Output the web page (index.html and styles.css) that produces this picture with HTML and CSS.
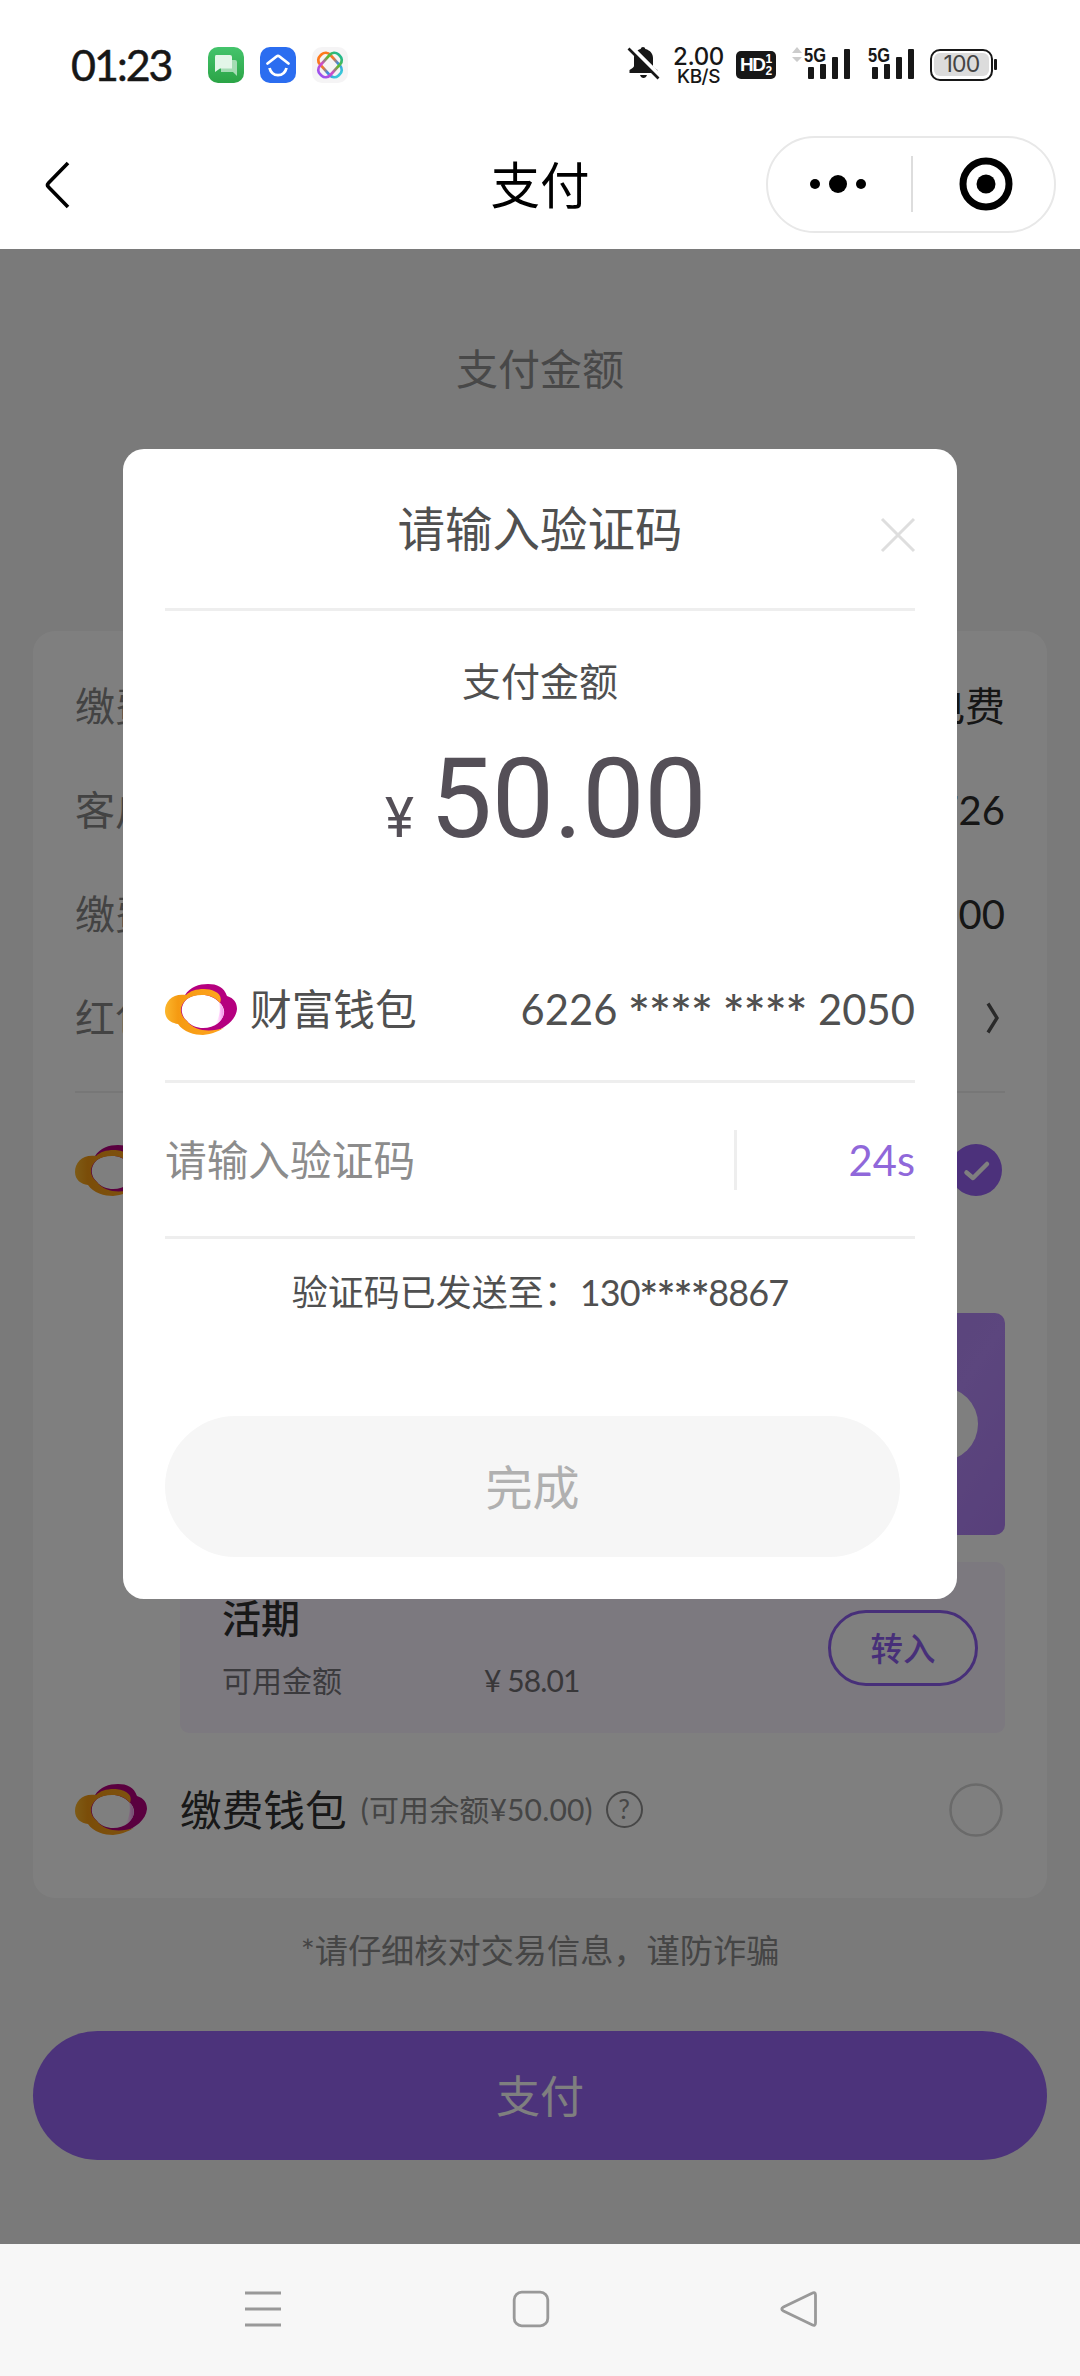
FILE: index.html
```html
<!DOCTYPE html>
<html lang="zh-CN">
<head>
<meta charset="utf-8">
<title>支付</title>
<link rel="stylesheet" href="styles.css">
</head>
<body>
<svg class="defs" width="0" height="0" aria-hidden="true">
  <defs>
    <linearGradient id="gold" x1="0" y1="0" x2="1" y2="0">
      <stop offset="0" stop-color="#fbb62c"/><stop offset=".22" stop-color="#f59a12"/><stop offset="1" stop-color="#ffa51f"/>
    </linearGradient>
    <linearGradient id="pink" x1="0" y1="0" x2="1" y2="0">
      <stop offset="0" stop-color="#fff" stop-opacity="0"/><stop offset=".6" stop-color="#ffc8fa"/><stop offset="1" stop-color="#f08be6"/>
    </linearGradient>
    <symbol id="cloud" viewBox="0 0 72 51">
      <path fill="#b5007f" fill-rule="evenodd" d="M20 11C25 3 34 0 43 0C52 0 59 3 62 12C69 14 72 19 72 25C71 36 60 44 49 48C39 51 28 49 19 41C9 33 9 20 20 11ZM22 15C15 21 15 31 22 37C29 46 45 46 53 39C61 32 61 24 54 18C47 10 31 8 22 15Z"/>
      <path fill="url(#pink)" d="M54 18C61 25 61 35 49 42C54 35 56 27 54 18Z"/>
      <path fill="url(#gold)" d="M21 11C8 9 0 17 0 27C0 35 6 39 13 40C18 48 30 51 38 51C47 50 54 47 59 44C46 48 30 48 22 37C14 31 14 21 22 15C31 9 48 9 55 19C59 9 47 5 39 5C31 5 25 7 21 11Z"/>
    </symbol>
  </defs>
</svg>

<header class="status">
  <span class="clock">01:23</span>
  <div class="apps">
    <svg width="36" height="36" viewBox="0 0 36 36"><defs><linearGradient id="g" x2="0" y2="1"><stop stop-color="#44c46c"/><stop offset="1" stop-color="#2ba446"/></linearGradient></defs><rect width="36" height="36" rx="10" fill="url(#g)"/><path fill="#a5dcb4" d="M13 13h14q2 0 2 2v14l-4-4H13z"/><path fill="#e3f6e8" d="M8 8h14q2 0 2 2v11.500H12L7 25V10q0-2 1-2z"/></svg>
    <svg width="36" height="36" viewBox="0 0 36 36"><rect width="36" height="36" rx="10" fill="#2b6df0"/><g fill="none" stroke="#fff" stroke-width="2.800" stroke-linecap="round"><path d="M7.500 16.500L16.500 9.500Q18 8.300 19.500 9.500L28.500 16.500"/><path d="M9.500 21C12 30.500 24 30.500 26.500 21" stroke-linecap="butt"/></g></svg>
    <svg width="36" height="36" viewBox="0 0 36 36"><defs><linearGradient id="a" x2="1"><stop stop-color="#ff7a1a"/><stop offset=".4" stop-color="#f0782e"/><stop offset=".65" stop-color="#3b8be0"/><stop offset="1" stop-color="#38c8d8"/></linearGradient><linearGradient id="b" x2="1"><stop stop-color="#9c52ee"/><stop offset=".35" stop-color="#d04ac8"/><stop offset=".65" stop-color="#63b82c"/><stop offset="1" stop-color="#23b98c"/></linearGradient></defs><rect width="36" height="36" rx="10" fill="#f5f4f5"/><g fill="none" stroke-width="2.700"><rect x="4.500" y="11" width="27" height="14" rx="6" transform="rotate(48 18 18)" stroke="url(#a)"/><rect x="4.500" y="11" width="27" height="14" rx="6" transform="rotate(-48 18 18)" stroke="url(#b)"/></g></svg>
  </div>
  <div class="signals">
    <svg class="bell" width="34" height="34" viewBox="0 0 34 34"><path fill="#171717" d="M16 1q2 0 2.400 2c5 1.300 7.600 5 7.600 9v8q0 1.500 4.500 4v3H2.500v-3Q7 21.500 7 20v-8c0-4 2-7.700 6.600-9Q14 1 16 1zM13 29h7q-1 3-3.500 3T13 29z"/><path stroke="#fff" stroke-width="6" d="M3 1l30 30"/><path stroke="#171717" stroke-width="2.600" d="M1.500 2.500l30 30"/></svg>
    <div class="speed"><b>2.00</b><span>KB/S</span></div>
    <div class="hd"><b>HD</b><span><i>1</i><i>2</i></span></div>
    <svg class="sim" width="63" height="36" viewBox="0 0 63 36"><path fill="#ccc" d="M4 7l5-6 5 6zM4 11h10l-5 5z"/><g fill="#171717"><rect x="20" y="21" width="6" height="12" rx="1"/><rect x="32" y="18" width="6" height="15" rx="1"/><rect x="44" y="11" width="6" height="22" rx="1"/><rect x="56" y="3" width="6" height="30" rx="1"/><text class="net" x="16" y="16" textLength="22" lengthAdjust="spacingAndGlyphs">5G</text></g></svg>
    <svg class="sim2" width="48" height="36" viewBox="15 0 48 36"><g fill="#171717"><rect x="20" y="21" width="6" height="12" rx="1"/><rect x="32" y="18" width="6" height="15" rx="1"/><rect x="44" y="11" width="6" height="22" rx="1"/><rect x="56" y="3" width="6" height="30" rx="1"/><text class="net" x="16" y="16" textLength="22" lengthAdjust="spacingAndGlyphs">5G</text></g></svg>
    <div class="battery"><span>100</span></div><i class="nub"></i>
  </div>
</header>

<nav class="title-bar">
  <svg width="26" height="50" viewBox="0 0 26 50"><path d="M24 3L4.500 23Q2.500 25 4.500 27L24 47" fill="none" stroke="#000" stroke-width="3.600"/></svg>
  <h1>支付</h1>
  <div class="capsule">
    <svg width="60" height="20" viewBox="0 0 60 20"><circle cx="7" cy="10" r="5"/><circle cx="30" cy="10" r="9"/><circle cx="53" cy="10" r="5"/></svg>
    <i></i>
    <svg width="54" height="54" viewBox="0 0 54 54"><circle cx="27" cy="27" r="23" fill="none" stroke="#000" stroke-width="7"/><circle cx="27" cy="27" r="9.500"/></svg>
  </div>
</nav>

<main class="page">
  <p class="page-label">支付金额</p>
  <section class="card">
    <dl class="facts">
      <div><dt>缴费</dt><dd class="word">电费</dd></div>
      <div><dt>客户</dt><dd>726</dd></div>
      <div><dt>缴费</dt><dd>00</dd></div>
      <div><dt>红包</dt><dd><svg width="20" height="34" viewBox="0 0 20 34"><path d="M3 2.500L12 17L3 31.500" fill="none" stroke="#555" stroke-width="3.400"/></svg></dd></div>
    </dl>
    <div class="option">
      <svg class="logo" width="72" height="51"><use href="#cloud"/></svg>
      <svg class="mark" width="54" height="54" viewBox="0 0 54 54"><circle cx="27" cy="27" r="26" fill="#9863f6"/><path d="M17.500 29.500L24 35L38 21" fill="none" stroke="#fff" stroke-width="4.500" stroke-linecap="round" stroke-linejoin="round"/></svg>
    </div>
    <div class="banner"><span></span></div>
    <div class="fund">
      <div>
        <h2>活期</h2>
        <p><span>可用金额</span><span class="sum">¥ 58.01</span></p>
      </div>
      <button class="transfer">转入</button>
    </div>
    <div class="option second">
      <svg class="logo" width="72" height="51"><use href="#cloud"/></svg>
      <span class="name">缴费钱包</span>
      <span class="balance">(可用余额¥50.00)</span>
      <span class="help">?</span>
      <svg class="mark" width="54" height="54" viewBox="0 0 54 54"><circle cx="27" cy="27" r="25.500" fill="none" stroke="#d4d4d4" stroke-width="2.500"/></svg>
    </div>
  </section>
  <p class="warning">*请仔细核对交易信息，谨防诈骗</p>
  <button class="pay">支付</button>

  <div class="mask">
    <section class="dialog">
      <header>
        <h2>请输入验证码</h2>
        <svg class="close" width="36" height="36" viewBox="0 0 36 36"><path d="M2 2L34 34M34 2L2 34" stroke="#dedede" stroke-width="3"/></svg>
      </header>
      <p class="label">支付金额</p>
      <p class="amount"><small>¥</small><span>50.00</span></p>
      <div class="wallet">
        <svg class="logo" width="72" height="51"><use href="#cloud"/></svg>
        <span class="word">财富钱包</span>
        <span class="number">6226 <i>****</i> <i>****</i> 2050</span>
      </div>
      <div class="code">
        <span class="hint">请输入验证码</span>
        <i></i>
        <span class="timer">24s</span>
      </div>
      <p class="sent">验证码已发送至：<span>130<i>****</i>8867</span></p>
      <button class="done">完成</button>
    </section>
  </div>
</main>

<footer class="keys">
  <svg width="38" height="38" viewBox="0 0 38 38"><path d="M1 3h36M1 19h36M1 35h36"/></svg>
  <svg width="38" height="38" viewBox="0 0 38 38"><rect x="2.200" y="2.200" width="33.600" height="33.600" rx="7.500"/></svg>
  <svg width="38" height="38" viewBox="0 0 38 38"><path d="M32 3.300Q35.500 1.300 35.500 5V33Q35.500 36.500 32 34.700L3.500 21Q0 19 3.500 17Z"/></svg>
</footer>
</body>
</html>
```
FILE: styles.css
```css
* { box-sizing: border-box; margin: 0; padding: 0; }
body {
  width: 1080px;
  height: 2376px;
  display: flex;
  flex-direction: column;
  overflow: hidden;
  background: #fff;
  font-family: Lato, "Noto Sans CJK SC", sans-serif;
  font-weight: 400;
  color: #505050;
}
i { font-style: normal; }
h1, h2 { font-weight: 400; }
svg { display: block; flex: none; overflow: visible; }
button { font-family: inherit; border: 0; }
.defs { position: absolute; }
.word { padding-bottom: 4px; }

/* status bar */
.status { height: 120px; display: flex; align-items: flex-start; padding: 46px 83px 0 71px; color: #171717; }
.clock { width: 137px; height: 38px; line-height: 38px; font-size: 43px; letter-spacing: -2px; -webkit-text-stroke: .5px #171717; }
.apps { display: flex; gap: 16px; margin-top: 1px; }
.signals { display: flex; margin-left: auto; align-items: flex-start; }
.bell { margin-right: 12px; }
.speed { width: 51px; display: flex; flex-direction: column; align-items: center; font-family: Inter, sans-serif; }
.speed b { font-size: 24px; line-height: 22px; font-weight: 500; letter-spacing: -.4px; }
.speed span { font-size: 19px; line-height: 17px; font-weight: 500; letter-spacing: -.5px; }
.hd { width: 40px; height: 28px; margin: 5px 12px 0 12px; border-radius: 5px; background: #171717; color: #fff; display: flex; align-items: center; justify-content: center; font-family: "Liberation Sans", sans-serif; }
.hd b { font-size: 19px; line-height: 28px; letter-spacing: -1.500px; }
.hd span { display: flex; flex-direction: column; margin-left: 1px; font-size: 12px; line-height: 12px; font-weight: 700; }
.net { font: 700 21px "Liberation Sans", sans-serif; }
.sim { margin-right: 16px; }
.sim2 { margin-right: 15px; }
.battery { width: 63px; height: 32px; margin-top: 3px; border: 2.500px solid #171717; border-radius: 10px; padding: 2px; }
.battery span { display: block; height: 23px; border-radius: 6px; background: #dcdcdc; color: #444; font: 23px/23px Inter, sans-serif; text-align: center; letter-spacing: -.8px; }
.nub { width: 3px; height: 11px; margin: 13px 0 0 1px; border-radius: 1px; background: #171717; }

/* title bar */
.title-bar { height: 129px; display: grid; grid-template-columns: 290px 1fr 290px; align-items: center; padding: 0 24px; color: #000; }
.title-bar > svg { margin-left: 20px; }
.title-bar h1 { font-size: 49.500px; line-height: 60px; margin-top: 1px; text-align: center; }
.capsule { height: 97px; margin-top: -1px; border: 2px solid #e8e8e8; border-radius: 50px; display: flex; align-items: center; padding-left: 40px; }
.capsule i { width: 2px; height: 56px; margin: 0 46px 0 43px; background: #ddd; }

/* page below the dialog */
.page { position: relative; height: 1995px; background: #f4f4f4; padding: 0 33px; }
.page-label { padding-top: 90px; font-size: 42px; line-height: 60px; text-align: center; color: #909090; }
.card { height: 1267px; margin-top: 232px; padding: 23px 42px 0; border-radius: 22px; background: #fff; }
.facts { border-bottom: 2px solid #eee; padding-bottom: 21px; }
.facts div { height: 104px; display: flex; justify-content: space-between; align-items: center; font-size: 40px; }
.facts dt { color: #868686; padding-bottom: 4px; }
.facts dd { color: #2c2c2c; }
.option { height: 154px; display: flex; align-items: center; }
.mark { margin: 0 2px 0 auto; }
.banner { height: 222px; margin: 66px 0 27px 105px; padding-right: 27px; border-radius: 10px; background: linear-gradient(125deg, #9a76da, #b88cfc 85%, #b080f6); display: flex; align-items: center; justify-content: flex-end; }
.banner span { width: 150px; height: 74px; border-radius: 37px; background: #fff; }
.fund { height: 171px; margin-left: 105px; padding: 0 27px 0 42px; border-radius: 9px; background: #f8f2fe; display: flex; align-items: flex-start; justify-content: space-between; }
.fund h2 { height: 60px; margin-top: 26px; line-height: 60px; font-size: 39px; font-weight: 500; color: #303030; }
.fund p { display: flex; margin-top: 2px; line-height: 60px; font-size: 30px; color: #77757a; }
.fund p span { width: 262px; }
.fund .sum { width: auto; color: #706e73; letter-spacing: -.9px; }
.transfer { width: 150px; height: 76px; margin-top: 48px; padding-bottom: 3px; border: 3px solid #8f5ff2; border-radius: 38px; background: #fff; color: #8f5ff2; font-size: 32.500px; font-weight: 500; }
.second { height: 153px; }
.name { margin-left: 33px; padding-bottom: 3px; font-size: 41.700px; color: #303030; }
.balance { margin-left: 14px; padding-bottom: 4px; font-size: 30px; letter-spacing: .15px; color: #8a8a8a; }
.help { width: 37px; height: 37px; margin-left: 13px; border: 2px solid #8f8f8f; border-radius: 50%; font-size: 26px; line-height: 33px; text-align: center; color: #8f8f8f; }
.warning { height: 104px; line-height: 104px; font-size: 33.200px; text-align: center; color: #8a8a8a; }
.pay { width: 1014px; height: 129px; margin-top: 29px; padding-bottom: 3px; border-radius: 65px; background: #9866f6; color: #fff; font-size: 44px; }

/* verification dialog */
.mask { position: absolute; inset: 0; background: rgba(0, 0, 0, .5); padding: 200px 123px 0; }
.dialog { width: 834px; height: 1150px; padding: 0 42px; border-radius: 21px; background: #fff; }
.dialog header { height: 162px; display: grid; grid-template-columns: 36px 1fr 36px; align-items: center; border-bottom: 3px solid #eee; }
.dialog h2 { grid-column: 2; font-size: 47.500px; line-height: 60px; text-align: center; }
.close { margin: 12px 0 0 1px; }
.label { margin-top: 40px; font-size: 39px; line-height: 60px; text-align: center; }
.amount { height: 178px; margin-bottom: 49px; padding-left: 11px; line-height: 176px; text-align: center; font-family: Roboto, sans-serif; font-size: 111px; color: #544f57; }
.amount small { font-size: 55px; margin-right: 16px; }
.amount span { letter-spacing: -.5px; }
.wallet { height: 145px; display: flex; align-items: center; border-bottom: 3px solid #eee; font-size: 41.700px; }
.wallet .logo { margin-right: 13px; }
.number { margin-left: auto; letter-spacing: .1px; }
.code { height: 156px; display: flex; align-items: center; border-bottom: 3px solid #eee; font-size: 41.700px; }
.hint { padding-bottom: 3px; color: #8c8c8c; }
.code i { width: 3px; height: 60px; margin-left: auto; background: #eee; }
.timer { width: 178px; text-align: right; color: #9068da; }
.sent { height: 106px; line-height: 106px; text-align: center; font-size: 36px; }
.sent span { letter-spacing: -.9px; }
.number i, .sent i { font-family: Inter, sans-serif; }
.done { width: 735px; height: 141px; margin-top: 71px; padding-bottom: 4px; border-radius: 71px; background: #f6f6f6; color: #b0b0b0; font-size: 47px; }

/* system keys */
.keys { height: 132px; display: flex; align-items: center; padding: 0 0 2px 244px; gap: 230px; background: #f7f7f7; }
.keys svg { fill: none; stroke: #999; stroke-width: 2.800; }
```
